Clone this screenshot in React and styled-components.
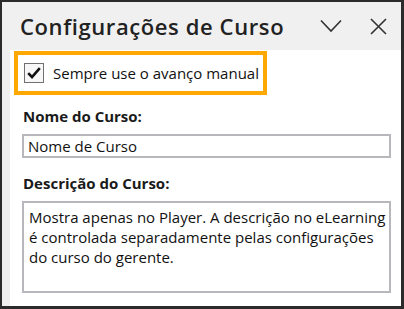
import React from "react";
import styled, { createGlobalStyle } from "styled-components";

const GlobalStyle = createGlobalStyle`
  html, body {
    margin: 0;
    padding: 0;
    background: #ffffff;
  }
  * {
    box-sizing: border-box;
  }
`;

const App = () => {
  return (
    <>
      <GlobalStyle />
      <Window>
        <Header>
          <Title>Configurações de Curso</Title>
          <HeaderIcons>
            <IconButton aria-label="Recolher">
              <svg width="22" height="14" viewBox="0 0 22 14">
                <path d="M1 1.5 L11 12 L21 1.5" fill="none" stroke="#333" strokeWidth="1.6" />
              </svg>
            </IconButton>
            <IconButton aria-label="Fechar">
              <svg width="17" height="17" viewBox="0 0 17 17">
                <path d="M1 1 L16 16 M16 1 L1 16" fill="none" stroke="#333" strokeWidth="1.6" />
              </svg>
            </IconButton>
          </HeaderIcons>
        </Header>
        <Body>
          <Highlight>
            <CheckBox>
              <svg width="14" height="12" viewBox="0 0 14 12">
                <path d="M1.2 6.2 L5 10 L12.8 1.2" fill="none" stroke="#111" strokeWidth="2.6" />
              </svg>
            </CheckBox>
            <CheckLabel>Sempre use o avanço manual</CheckLabel>
          </Highlight>
          <Field>
            <Label>Nome do Curso:</Label>
            <Input>Nome de Curso</Input>
          </Field>
          <Field $gap={15}>
            <Label>Descrição do Curso:</Label>
            <TextArea>
              Mostra apenas no Player. A descrição no eLearning é controlada
              separadamente pelas configurações do curso do gerente.
            </TextArea>
          </Field>
        </Body>
      </Window>
    </>
  );
};

export default App;

const Window = styled.div`
  width: 404px;
  height: 309px;
  border: 2px solid #2b2b2b;
  border-right-width: 3px;
  border-bottom-width: 3px;
  background: #f0f0f0;
  display: flex;
  flex-direction: column;
  font-family: "Open Sans", "Noto Sans", sans-serif;
  color: #1a1a1a;
`;

const Header = styled.div`
  height: 48px;
  flex-shrink: 0;
  display: flex;
  align-items: center;
  justify-content: space-between;
  padding: 0 14px 0 18px;
`;

const Title = styled.h1`
  margin: 0;
  font-size: 22px;
  font-weight: 600;
  color: #222;
  letter-spacing: 0.6px;
`;

const HeaderIcons = styled.div`
  display: flex;
  align-items: center;
  gap: 28px;
`;

const IconButton = styled.span`
  display: flex;
  align-items: center;
  justify-content: center;
`;

const Body = styled.div`
  flex: 1;
  margin-left: 8px;
  background: #ffffff;
  padding: 1px 10px 0 4px;
`;

const Highlight = styled.div`
  width: 253px;
  height: 44px;
  border: 4px solid #ffa800;
  display: flex;
  align-items: center;
  padding-left: 6px;
  gap: 9px;
`;

const CheckBox = styled.span`
  width: 20px;
  height: 20px;
  border: 1.5px solid #707070;
  background: #f7f7f7;
  display: flex;
  align-items: center;
  justify-content: center;
`;

const CheckLabel = styled.span`
  font-size: 15px;
  color: #111;
`;

const Field = styled.div`
  padding-left: 8px;
  margin-top: ${(p) => p.$gap || 11}px;
  display: flex;
  flex-direction: column;
`;

const Label = styled.div`
  font-size: 15px;
  font-weight: 700;
  line-height: 20px;
  margin-bottom: 8px;
  padding-left: 1px;
`;

const Input = styled.div`
  width: 369px;
  height: 24px;
  border: 2px solid #b7b7bc;
  font-size: 15px;
  line-height: 20px;
  padding-left: 4px;
  color: #111;
`;

const TextArea = styled.div`
  width: 369px;
  height: 92px;
  border: 2px solid #b7b7bc;
  font-size: 15px;
  line-height: 20px;
  padding: 4px 1px 4px 5px;
  color: #111;
`;
